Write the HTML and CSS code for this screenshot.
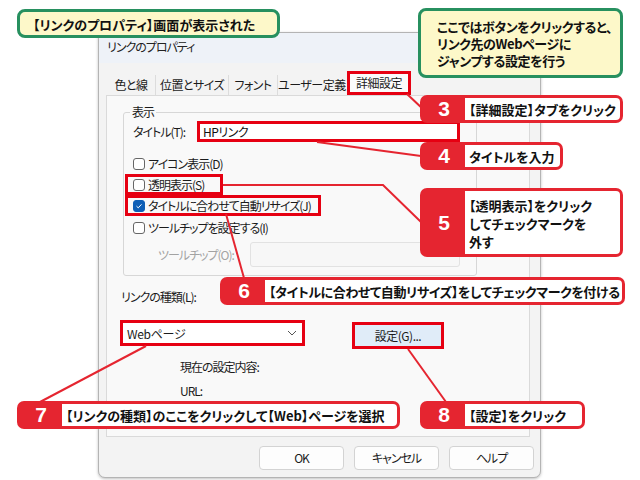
FILE: index.html
```html
<!DOCTYPE html>
<html lang="ja">
<head>
<meta charset="utf-8">
<title>リンクのプロパティ</title>
<link rel="stylesheet" href="styles.css">
</head>
<body>
<div class="stage">
  <div class="dialog">
    <div class="titlebar">リンクのプロパティ</div>
    <div class="tabs">
      <div class="tab w1">色と線</div>
      <div class="tab sep w2">位置とサイズ</div>
      <div class="tab sep w3">フォント</div>
      <div class="tab sep w4">ユーザー定義</div>
      <div class="tab active">詳細設定</div>
    </div>
    <div class="panel">
      <fieldset class="group">
        <legend>表示</legend>
        <div class="title-row">
          <span class="title-label">タイトル(T):</span>
          <div class="input hl">HPリンク</div>
        </div>
        <div class="check first"><span class="box"></span>アイコン表示(D)</div>
        <div class="check hl w-tomei"><span class="box"></span>透明表示(S)</div>
        <div class="check hl w-resize"><span class="box on"><svg viewBox="0 0 12 12" width="12" height="12"><path d="M3 6.2 L5.1 8.2 L9 4" fill="none" stroke="#fff" stroke-width="1.2"/></svg></span>タイトルに合わせて自動リサイズ(J)</div>
        <div class="check last"><span class="box"></span>ツールチップを設定する(I)</div>
        <div class="tip-row">
          <span class="tip-label">ツールチップ(O):</span>
          <div class="tip-input"></div>
        </div>
      </fieldset>
      <div class="link-label">リンクの種類(L):</div>
      <div class="combo-row">
        <div class="combo hl">
          <span>Webページ</span>
          <svg viewBox="0 0 10 6" width="10" height="6"><path d="M1 1 L5 5 L9 1" fill="none" stroke="#555" stroke-width="1"/></svg>
        </div>
        <div class="setbtn hl">設定(G)...</div>
      </div>
      <div class="info first-info">現在の設定内容:</div>
      <div class="info">URL:</div>
    </div>
    <div class="buttons">
      <div class="btn">OK</div>
      <div class="btn">キャンセル</div>
      <div class="btn">ヘルプ</div>
    </div>
  </div>

  <svg class="lines" width="640" height="480" viewBox="0 0 640 480">
    <g stroke="#e52530" stroke-width="2" fill="none">
      <line x1="407" y1="94" x2="424" y2="110"/>
      <line x1="317" y1="142" x2="421" y2="156"/>
      <polyline points="223,185 383,185 421,222"/>
      <line x1="226" y1="214" x2="244" y2="278"/>
      <line x1="146" y1="346" x2="40" y2="402"/>
      <line x1="408" y1="349" x2="446" y2="402"/>
    </g>
  </svg>

  <div class="note n1">【リンクのプロパティ】画面が表示された</div>
  <div class="note n2">ここではボタンをクリックすると、<br>リンク先のWebページに<br>ジャンプする設定を行う</div>

  <div class="callout c3"><div class="num">3</div><div class="txt">【詳細設定】タブをクリック</div></div>
  <div class="callout c4"><div class="num">4</div><div class="txt">タイトルを入力</div></div>
  <div class="callout c5"><div class="num">5</div><div class="txt multi">【透明表示】をクリック<br>してチェックマークを<br>外す</div></div>
  <div class="callout c6"><div class="num">6</div><div class="txt tight">【タイトルに合わせて自動リサイズ】をしてチェックマークを付ける</div></div>
  <div class="callout c7"><div class="num">7</div><div class="txt">【リンクの種類】のここをクリックして【Web】ページを選択</div></div>
  <div class="callout c8"><div class="num">8</div><div class="txt">【設定】をクリック</div></div>
</div>
</body>
</html>
```
FILE: styles.css
```css
* { box-sizing: border-box; }
html, body { margin: 0; padding: 0; }
body {
  width: 640px;
  height: 480px;
  overflow: hidden;
  background: #ffffff;
  font-family: "Noto Sans CJK JP", "Noto Sans", sans-serif;
  font-size: 12px;
  color: #1b1b1b;
  font-feature-settings: "palt";
}
.stage { position: relative; width: 640px; height: 480px; }

/* dialog window */
.dialog {
  position: absolute;
  left: 98px;
  top: 32px;
  width: 443px;
  height: 446px;
  border: 1px solid #b4b4b4;
  border-radius: 0 0 7px 7px;
  background: #f3f3f3;
  box-shadow: 0 1px 3px rgba(0,0,0,0.25);
  display: flex;
  flex-direction: column;
  letter-spacing: -1px;
  white-space: nowrap;
}
.titlebar {
  height: 30px;
  line-height: 28px;
  padding-left: 8px;
  background: #eef2f8;
  color: #222;
}
.tabs {
  display: flex;
  align-items: flex-end;
  height: 22px;
  margin: 10px 0 0 8px;
  letter-spacing: -0.5px;
}
.tab {
  height: 20px;
  line-height: 20px;
  text-align: center;
  color: #1b1b1b;
}
.tab.sep { border-left: 1px solid #dcdcdc; }
.w1 { width: 48px; }
.w2 { width: 73px; }
.w3 { width: 49px; }
.w4 { width: 68px; }
.tab.active {
  width: 64px;
  height: 24px;
  line-height: 24px;
  margin-left: 2px;
  background: #fbfbfb;
  box-shadow: inset 0 0 0 3px #e60012;
}

.panel {
  margin: 0 10px 0 7px;
  height: 342px;
  border: 1px solid #dadada;
  background: #f9f9f9;
  padding: 8px 0 0 14px;
}

.group {
  margin: 0 0 0 2px;
  width: 354px;
  border: 1px solid #d7d7d7;
  border-radius: 3px;
  padding: 1px 9px 8px 9px;
  min-width: 0;
}
.group legend {
  padding: 0 2px;
  margin-left: -3px;
  line-height: 16px;
  font-size: 12px;
}
.title-row {
  display: flex;
  align-items: center;
  height: 21px;
}
.title-label { width: 64px; }
.input {
  width: 263px;
  height: 21px;
  line-height: 21px;
  background: #ffffff;
  padding-left: 6px;
  color: #111;
  letter-spacing: -0.5px;
}
.hl { box-shadow: inset 0 0 0 3px #e60012; }

.check {
  display: flex;
  align-items: center;
  height: 21px;
  width: fit-content;
  margin-left: -8px;
  padding: 0 6px 0 8px;
}
.check.first { margin-top: 11px; }
.check.last { margin-top: 1px; }
.w-tomei { width: 98px; }
.w-resize { padding-right: 10px; }
.box {
  width: 12px;
  height: 12px;
  margin-right: 3px;
  border: 1px solid #666;
  border-radius: 3px;
  background: #fff;
  display: flex;
  align-items: center;
  justify-content: center;
  flex: none;
}
.box.on { background: #0f5fb6; border-color: #0f5fb6; }
.box svg { display: block; }

.tip-row {
  display: flex;
  align-items: center;
  margin-top: 4px;
}
.tip-label {
  width: 117px;
  padding-left: 25px;
  color: #a3a3a3;
}
.tip-input {
  width: 210px;
  height: 25px;
  background: #f7f7f7;
  border: 1px solid #e2e2e2;
  border-radius: 3px;
}

.link-label {
  margin-top: 13px;
  line-height: 16px;
}
.combo-row {
  display: flex;
  align-items: flex-start;
  margin-top: 15px;
}
.combo {
  margin-left: -1px;
  width: 185px;
  height: 26px;
  background: #ffffff;
  padding: 0 8px 0 7px;
  display: flex;
  align-items: center;
  justify-content: space-between;
  letter-spacing: -0.3px;
}
.combo svg { display: block; }
.setbtn {
  margin-left: 47px;
  margin-top: 2px;
  width: 92px;
  height: 27px;
  line-height: 27px;
  text-align: center;
  background: #e0ecf8;
  letter-spacing: -0.5px;
}
.info {
  margin-left: 59px;
  margin-top: 8px;
  line-height: 16px;
}
.info.first-info { margin-top: 10px; }

.buttons {
  display: flex;
  justify-content: flex-end;
  gap: 10px;
  margin-top: 9px;
  padding-right: 6px;
}
.btn {
  width: 85px;
  height: 24px;
  line-height: 22px;
  text-align: center;
  background: #fdfdfd;
  border: 1px solid #d3d3d3;
  border-radius: 4px;
}

/* annotations */
.lines { position: absolute; left: 0; top: 0; }

.note {
  position: absolute;
  background: #fdf8c9;
  border: 3px solid #27905f;
  border-radius: 8px;
  font-weight: 700;
  font-size: 13px;
  color: #111;
  white-space: nowrap;
}
.n1 {
  left: 17px;
  top: 9px;
  width: 263px;
  height: 29px;
  padding: 2px 0 0 13px;
  line-height: 22px;
}
.n2 {
  left: 418px;
  top: 8px;
  width: 205px;
  height: 70px;
  padding: 7px 0 0 16px;
  line-height: 17px;
  letter-spacing: -0.4px;
}

.callout {
  position: absolute;
  display: flex;
  background: #e52530;
  border-radius: 7px;
  padding: 3px;
  height: 28px;
}
.num {
  width: 42px;
  flex: none;
  color: #fff;
  font-family: "Liberation Sans Narrow", "Liberation Sans", "Noto Sans", sans-serif;
  font-weight: 700;
  font-size: 21px;
  display: flex;
  align-items: center;
  justify-content: center;
}
.txt {
  flex: 1;
  background: #fff;
  border-radius: 0 4px 4px 0;
  padding-left: 4px;
  font-weight: 700;
  font-size: 13px;
  color: #111;
  display: flex;
  align-items: center;
  white-space: nowrap;
}
.txt.tight { letter-spacing: -0.4px; }
.txt.multi {
  display: block;
  padding-top: 6px;
  line-height: 18px;
}
.c3 { left: 420px; top: 95px; width: 203px; }
.c4 { left: 420px; top: 142px; width: 143px; }
.c5 { left: 420px; top: 188px; width: 203px; height: 69px; }
.c6 { left: 220px; top: 277px; width: 405px; }
.c7 { left: 17px; top: 401px; width: 383px; }
.c8 { left: 420px; top: 401px; width: 165px; }
```
